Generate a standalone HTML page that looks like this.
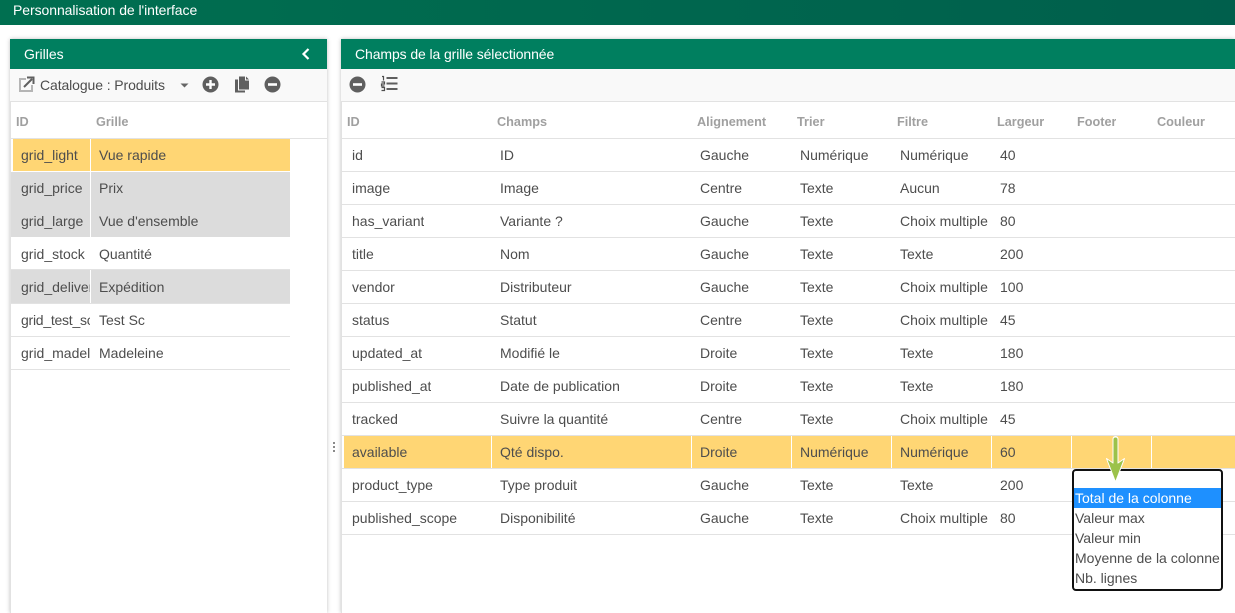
<!DOCTYPE html>
<html><head><meta charset="utf-8"><style>
html,body{margin:0;padding:0;width:1235px;height:613px;overflow:hidden;background:#fff;font-family:"Liberation Sans",sans-serif;font-size:14px;color:#4d4d4d}
div{box-sizing:border-box}
.a{position:absolute}
.t{position:absolute;white-space:nowrap;overflow:hidden;line-height:20px}
.h{color:#a0a0a0;font-weight:bold;font-size:12.7px;margin-top:1px}
.r{position:absolute;height:1px;background:#e2e2e2}
svg{position:absolute}
</style></head><body>
<div class="a" style="left:0;top:0;width:1235px;height:25px;background:linear-gradient(90deg,#006f50,#005f4c)"></div>
<div class="t" style="left:13px;top:0;color:#fff;font-size:14px;letter-spacing:-.07px">Personnalisation de l'interface</div>

<!-- left panel -->
<div class="a" style="left:10px;top:39px;width:317px;height:574px;box-shadow:0 0 4px rgba(0,0,0,.25);background:#fff"></div>
<div class="a" style="left:10px;top:39px;width:317px;height:30px;background:#007f5f"></div>
<div class="t" style="left:24px;top:44px;color:#fff">Grilles</div>
<svg style="left:300px;top:47px" width="12" height="14"><path d="M8.500 2 L3.500 7 L8.500 12" fill="none" stroke="#fff" stroke-width="2.200"/></svg>
<div class="a" style="left:10px;top:69px;width:317px;height:32px;background:#f9f9f9"></div>
<div class="r" style="left:10px;top:101px;width:317px"></div>
<div class="a" style="left:10px;top:101px;width:1px;height:512px;background:#e2e2e2"></div>
<svg style="left:18px;top:76px" width="17" height="17"><path d="M8 3H2V15H14V9" fill="none" stroke="#b5b5b5" stroke-width="2"/><path d="M6 11L14 3M9 1.500H15.500V8" fill="none" stroke="#5f5f5f" stroke-width="2"/></svg>
<div class="t" style="left:40px;top:75px;letter-spacing:-.1px">Catalogue : Produits</div>
<svg style="left:180px;top:83px" width="9" height="5"><path d="M0.500 0.500H8.500L4.500 4.500Z" fill="#666"/></svg>
<svg style="left:202px;top:76px" width="17" height="17"><circle cx="8.500" cy="8.500" r="8" fill="#5f5f5f"/><path d="M4 8.500H13M8.500 4V13" stroke="#fff" stroke-width="2.400"/></svg>
<svg style="left:234px;top:76px" width="16" height="17"><path d="M5 0.500H11V4.500H15V13.500H5Z" fill="#5f5f5f"/><path d="M12 0.500L15 3.500H12Z" fill="#5f5f5f"/><path d="M1 3.500H4V14.500H11V16.500H1Z" fill="#5f5f5f"/></svg>
<svg style="left:264px;top:76px" width="17" height="17"><circle cx="8.500" cy="8.500" r="8" fill="#5f5f5f"/><path d="M4 8.500H13" stroke="#fff" stroke-width="2.600"/></svg>

<div class="t h" style="left:16px;top:111px">ID</div>
<div class="t h" style="left:96px;top:111px">Grille</div>
<div class="r" style="left:11px;top:138px;width:316px"></div>

<div class="a" style="left:13px;top:139px;width:277px;height:32px;background:#ffd674"></div>
<div class="a" style="left:11px;top:172px;width:279px;height:65px;background:#dcdcdc"></div>
<div class="a" style="left:11px;top:270px;width:279px;height:33px;background:#dcdcdc"></div>
<div class="a" style="left:90px;top:139px;width:1px;height:98px;background:#fff"></div>
<div class="a" style="left:90px;top:270px;width:1px;height:33px;background:#fff"></div>
<div class="r" style="left:11px;top:269px;width:279px"></div>
<div class="r" style="left:11px;top:303px;width:279px"></div>
<div class="r" style="left:11px;top:336px;width:279px"></div>
<div class="r" style="left:11px;top:369px;width:279px"></div>

<div class="t" style="left:21px;top:145px;width:69px">grid_light</div><div class="t" style="left:99px;top:145px">Vue rapide</div>
<div class="t" style="left:21px;top:178px;width:69px">grid_price</div><div class="t" style="left:99px;top:178px">Prix</div>
<div class="t" style="left:21px;top:211px;width:69px">grid_large</div><div class="t" style="left:99px;top:211px">Vue d'ensemble</div>
<div class="t" style="left:21px;top:244px;width:69px">grid_stock</div><div class="t" style="left:99px;top:244px">Quantité</div>
<div class="t" style="left:21px;top:277px;width:69px">grid_delivery</div><div class="t" style="left:99px;top:277px">Expédition</div>
<div class="t" style="left:21px;top:310px;width:69px;letter-spacing:-.25px">grid_test_sc</div><div class="t" style="left:99px;top:310px">Test Sc</div>
<div class="t" style="left:21px;top:343px;width:69px">grid_madeleine</div><div class="t" style="left:99px;top:343px">Madeleine</div>

<!-- splitter -->
<div class="a" style="left:333px;top:442px;width:2px;height:2px;background:#8a8a8a"></div>
<div class="a" style="left:333px;top:446px;width:2px;height:2px;background:#8a8a8a"></div>
<div class="a" style="left:333px;top:450px;width:2px;height:2px;background:#8a8a8a"></div>

<!-- right panel -->
<div class="a" style="left:341px;top:39px;width:894px;height:574px;box-shadow:0 0 4px rgba(0,0,0,.25);background:#fff"></div>
<div class="a" style="left:341px;top:39px;width:894px;height:30px;background:#007f5f"></div>
<div class="t" style="left:355px;top:44px;color:#fff;letter-spacing:-.1px">Champs de la grille sélectionnée</div>
<div class="a" style="left:341px;top:69px;width:894px;height:32px;background:#f9f9f9"></div>
<div class="r" style="left:341px;top:101px;width:894px"></div>
<div class="a" style="left:341px;top:101px;width:1px;height:512px;background:#e2e2e2"></div>
<svg style="left:349px;top:76px" width="17" height="17"><circle cx="8.500" cy="8.500" r="8" fill="#5f5f5f"/><path d="M4 8.500H13" stroke="#fff" stroke-width="2.600"/></svg>
<svg style="left:380px;top:75px" width="18" height="17"><path d="M6.500 3H17.500M6.500 8.500H17.500M6.500 14H17.500" stroke="#5f5f5f" stroke-width="2"/><path d="M2 1.500H3.500V5.500M1.500 7H4.500V9H1.500V11H4.500M1.500 12.500H4.500V15.500H1.500" fill="none" stroke="#4f4f4f" stroke-width="1.200"/></svg>

<div class="t h" style="left:347px;top:111px">ID</div>
<div class="t h" style="left:497px;top:111px">Champs</div>
<div class="t h" style="left:697px;top:111px">Alignement</div>
<div class="t h" style="left:797px;top:111px">Trier</div>
<div class="t h" style="left:897px;top:111px">Filtre</div>
<div class="t h" style="left:997px;top:111px">Largeur</div>
<div class="t h" style="left:1077px;top:111px">Footer</div>
<div class="t h" style="left:1157px;top:111px">Couleur</div>
<div class="r" style="left:342px;top:138px;width:893px"></div>
<div class="r" style="left:342px;top:171px;width:893px"></div>
<div class="r" style="left:342px;top:204px;width:893px"></div>
<div class="r" style="left:342px;top:237px;width:893px"></div>
<div class="r" style="left:342px;top:270px;width:893px"></div>
<div class="r" style="left:342px;top:303px;width:893px"></div>
<div class="r" style="left:342px;top:336px;width:893px"></div>
<div class="r" style="left:342px;top:369px;width:893px"></div>
<div class="r" style="left:342px;top:402px;width:893px"></div>
<div class="r" style="left:342px;top:435px;width:893px"></div>
<div class="r" style="left:342px;top:468px;width:893px"></div>
<div class="r" style="left:342px;top:501px;width:893px"></div>
<div class="r" style="left:342px;top:534px;width:893px"></div>

<div class="a" style="left:344px;top:436px;width:891px;height:32px;background:#ffd674"></div>
<div class="a" style="left:491px;top:436px;width:1px;height:32px;background:#fff"></div>
<div class="a" style="left:691px;top:436px;width:1px;height:32px;background:#fff"></div>
<div class="a" style="left:791px;top:436px;width:1px;height:32px;background:#fff"></div>
<div class="a" style="left:891px;top:436px;width:1px;height:32px;background:#fff"></div>
<div class="a" style="left:991px;top:436px;width:1px;height:32px;background:#fff"></div>
<div class="a" style="left:1071px;top:436px;width:1px;height:32px;background:#fff"></div>
<div class="a" style="left:1151px;top:436px;width:1px;height:32px;background:#fff"></div>

<div class="t" style="left:352px;top:145px">id</div><div class="t" style="left:500px;top:145px">ID</div><div class="t" style="left:700px;top:145px">Gauche</div><div class="t" style="left:800px;top:145px">Numérique</div><div class="t" style="left:900px;top:145px">Numérique</div><div class="t" style="left:1000px;top:145px">40</div>
<div class="t" style="left:352px;top:178px">image</div><div class="t" style="left:500px;top:178px">Image</div><div class="t" style="left:700px;top:178px">Centre</div><div class="t" style="left:800px;top:178px">Texte</div><div class="t" style="left:900px;top:178px">Aucun</div><div class="t" style="left:1000px;top:178px">78</div>
<div class="t" style="left:352px;top:211px">has_variant</div><div class="t" style="left:500px;top:211px">Variante ?</div><div class="t" style="left:700px;top:211px">Gauche</div><div class="t" style="left:800px;top:211px">Texte</div><div class="t" style="left:900px;top:211px">Choix multiple</div><div class="t" style="left:1000px;top:211px">80</div>
<div class="t" style="left:352px;top:244px">title</div><div class="t" style="left:500px;top:244px">Nom</div><div class="t" style="left:700px;top:244px">Gauche</div><div class="t" style="left:800px;top:244px">Texte</div><div class="t" style="left:900px;top:244px">Texte</div><div class="t" style="left:1000px;top:244px">200</div>
<div class="t" style="left:352px;top:277px">vendor</div><div class="t" style="left:500px;top:277px">Distributeur</div><div class="t" style="left:700px;top:277px">Gauche</div><div class="t" style="left:800px;top:277px">Texte</div><div class="t" style="left:900px;top:277px">Choix multiple</div><div class="t" style="left:1000px;top:277px">100</div>
<div class="t" style="left:352px;top:310px">status</div><div class="t" style="left:500px;top:310px">Statut</div><div class="t" style="left:700px;top:310px">Centre</div><div class="t" style="left:800px;top:310px">Texte</div><div class="t" style="left:900px;top:310px">Choix multiple</div><div class="t" style="left:1000px;top:310px">45</div>
<div class="t" style="left:352px;top:343px">updated_at</div><div class="t" style="left:500px;top:343px">Modifié le</div><div class="t" style="left:700px;top:343px">Droite</div><div class="t" style="left:800px;top:343px">Texte</div><div class="t" style="left:900px;top:343px">Texte</div><div class="t" style="left:1000px;top:343px">180</div>
<div class="t" style="left:352px;top:376px">published_at</div><div class="t" style="left:500px;top:376px">Date de publication</div><div class="t" style="left:700px;top:376px">Droite</div><div class="t" style="left:800px;top:376px">Texte</div><div class="t" style="left:900px;top:376px">Texte</div><div class="t" style="left:1000px;top:376px">180</div>
<div class="t" style="left:352px;top:409px">tracked</div><div class="t" style="left:500px;top:409px">Suivre la quantité</div><div class="t" style="left:700px;top:409px">Centre</div><div class="t" style="left:800px;top:409px">Texte</div><div class="t" style="left:900px;top:409px">Choix multiple</div><div class="t" style="left:1000px;top:409px">45</div>
<div class="t" style="left:352px;top:442px">available</div><div class="t" style="left:500px;top:442px">Qté dispo.</div><div class="t" style="left:700px;top:442px">Droite</div><div class="t" style="left:800px;top:442px">Numérique</div><div class="t" style="left:900px;top:442px">Numérique</div><div class="t" style="left:1000px;top:442px">60</div>
<div class="t" style="left:352px;top:475px">product_type</div><div class="t" style="left:500px;top:475px">Type produit</div><div class="t" style="left:700px;top:475px">Gauche</div><div class="t" style="left:800px;top:475px">Texte</div><div class="t" style="left:900px;top:475px">Texte</div><div class="t" style="left:1000px;top:475px">200</div>
<div class="t" style="left:352px;top:508px">published_scope</div><div class="t" style="left:500px;top:508px">Disponibilité</div><div class="t" style="left:700px;top:508px">Gauche</div><div class="t" style="left:800px;top:508px">Texte</div><div class="t" style="left:900px;top:508px">Choix multiple</div><div class="t" style="left:1000px;top:508px">80</div>

<!-- dropdown -->
<div class="a" style="left:1072px;top:469px;width:151px;height:122px;background:#fff;border:2px solid #111;border-radius:4px"></div>
<div class="a" style="left:1074px;top:488px;width:147px;height:20px;background:#1e90ff"></div>
<div class="t" style="left:1075px;top:488px;color:#fff">Total de la colonne</div>
<div class="t" style="left:1075px;top:508px">Valeur max</div>
<div class="t" style="left:1075px;top:528px">Valeur min</div>
<div class="t" style="left:1075px;top:548px;width:146px">Moyenne de la colonne</div>
<div class="t" style="left:1075px;top:568px">Nb. lignes</div>
<svg style="left:1104px;top:436px" width="24" height="50"><path d="M11.500 3V26" stroke="#fff" stroke-width="6" stroke-linecap="round"/><path d="M2.500 22.500L9 27H14L20.500 22.500L11.500 46Z" fill="#9cc24a" stroke="#fff" stroke-width="1" stroke-linejoin="round"/><path d="M11.500 3.500V30" stroke="#9cc24a" stroke-width="4" stroke-linecap="round"/></svg>
</body></html>
